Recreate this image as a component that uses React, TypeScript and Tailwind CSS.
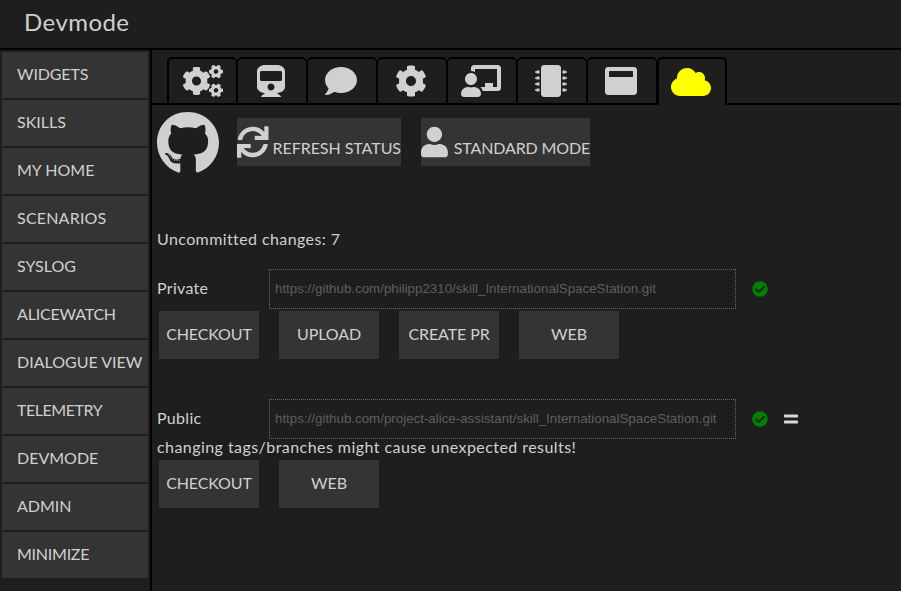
import React from "react";
import { FaCogs, FaTrain, FaComment, FaCog, FaChalkboardTeacher, FaMicrochip, FaWindowMaximize, FaCloud, FaGithub, FaSync, FaUser, FaCheckCircle, FaEquals } from "react-icons/fa";

const menu = [
  { label: "WIDGETS", cls: "tracking-[-0.15px]" },
  { label: "SKILLS", cls: "" },
  { label: "MY HOME", cls: "" },
  { label: "SCENARIOS", cls: "tracking-[0.2px]" },
  { label: "SYSLOG", cls: "" },
  { label: "ALICEWATCH", cls: "tracking-[-0.2px]" },
  { label: "DIALOGUE VIEW", cls: "" },
  { label: "TELEMETRY", cls: "tracking-[-0.45px]" },
  { label: "DEVMODE", cls: "" },
  { label: "ADMIN", cls: "" },
  { label: "MINIMIZE", cls: "tracking-[-0.25px]" },
];
const tabs = [
  { Icon: FaCogs, w: 40, cls: "border-l-2 border-r" },
  { Icon: FaTrain, w: 32, cls: "border-x pr-0.5" },
  { Icon: FaComment, w: 32, cls: "border-x pr-0.5" },
  { Icon: FaCog, w: 32, cls: "border-x pr-0.5" },
  { Icon: FaChalkboardTeacher, w: 40, cls: "border-x pr-0.5" },
  { Icon: FaMicrochip, w: 32, cls: "border-x pr-0.5" },
  { Icon: FaWindowMaximize, w: 32, cls: "border-x pr-0.5" },
];

function Btn({ children }: { children: React.ReactNode }) {
  return <div className="flex h-12 w-[100px] items-center justify-center bg-[#343434] pb-0.5 tracking-[-0.1px] text-[#d0d0d0]">{children}</div>;
}

function UrlBox({ url }: { url: string }) {
  return (
    <div className="ml-[37px] flex h-10 w-[467px] items-center border border-dotted border-[#6a6a6a] pl-[5px] font-['Liberation_Sans',sans-serif] text-[13.333px] text-[#5e5e5e]">
      {url}
    </div>
  );
}

export default function App() {
  return (
    <div className="flex h-[591px] w-[901px] flex-col overflow-hidden bg-[#1e1e1e] font-['Lato',sans-serif] text-[16px] text-[#d0d0d0]">
      <header className="flex h-[50px] shrink-0 items-center border-b-2 border-black pb-[5px] pl-6 text-[24px] leading-none tracking-[0.45px]">Devmode</header>
      <div className="flex min-h-0 flex-1">
        <nav className="flex w-[152px] shrink-0 flex-col gap-0.5 border-r-2 border-black px-0.5 pt-0.5">
          {menu.map((m) => (
            <div key={m.label} className={`flex h-[46px] shrink-0 items-center whitespace-nowrap bg-[#343434] pb-0.5 pl-[15px] text-[#d0d0d0] ${m.cls}`}>{m.label}</div>
          ))}
        </nav>
        <main className="flex min-w-0 flex-1 flex-col">
          <div className="flex h-[55px] shrink-0 items-end pt-[7px]">
            <div className="h-full w-[15px] border-b-2 border-black" />
            {tabs.map(({ Icon, w, cls }, i) => (
              <div key={i} className={`flex h-full w-[70px] items-center justify-center rounded-t-[5px] border-y-2 border-black text-[#d0d0d0] ${cls}`}>
                <Icon size={w} />
              </div>
            ))}
            <div className="flex h-full w-[70px] items-center justify-center rounded-t-[5px] border-x-2 border-t-2 border-black pr-0.5 text-[#ffff00]">
              <FaCloud size={40} />
            </div>
            <div className="h-full flex-1 border-b-2 border-black" />
          </div>
          <div className="flex pl-[5px] pt-1.5">
            <FaGithub className="h-16 w-[62px] text-[#d0d0d0]" />
            <div className="ml-[18px] mt-[7px] flex h-12 w-[164px] items-center whitespace-nowrap bg-[#343434]">
              <FaSync className="mr-1 h-8 w-[33px]" />
              <span className="mt-[11px] tracking-[-0.05px] text-[#d0d0d0]">REFRESH STATUS</span>
            </div>
            <div className="ml-5 mt-[7px] flex h-12 w-[169px] items-center whitespace-nowrap bg-[#343434]">
              <FaUser className="mr-1.5 h-8 w-7" />
              <span className="mt-[11px] tracking-[-0.15px] text-[#d0d0d0]">STANDARD MODE</span>
            </div>
          </div>
          <div className="mt-[54px] pl-[5px] leading-5 tracking-[0.4px]">Uncommitted changes: 7</div>
          <div className="mt-[20px] flex h-10 items-center pl-[5px]">
            <span className="-mt-0.5 w-[75px] tracking-[0.3px]">Private</span>
            <UrlBox url="https://github.com/philipp2310/skill_InternationalSpaceStation.git" />
            <FaCheckCircle size={16} className="ml-4 text-[#008000]" />
          </div>
          <div className="ml-[7px] mt-0.5 flex gap-5">
            <Btn>CHECKOUT</Btn>
            <Btn>UPLOAD</Btn>
            <Btn>CREATE PR</Btn>
            <Btn>WEB</Btn>
          </div>
          <div className="mt-10 flex h-10 items-center pl-[5px]">
            <span className="-mt-0.5 w-[75px] tracking-[0.3px]">Public</span>
            <UrlBox url="https://github.com/project-alice-assistant/skill_InternationalSpaceStation.git" />
            <FaCheckCircle size={16} className="ml-4 text-[#008000]" />
            <FaEquals size={16} className="ml-[15px] text-[#d8d8d8]" />
          </div>
          <div className="-mt-px pl-[5px] leading-[18px] tracking-[0.44px]">changing tags/branches might cause unexpected results!</div>
          <div className="ml-[7px] mt-1 flex gap-5">
            <Btn>CHECKOUT</Btn>
            <Btn>WEB</Btn>
          </div>
        </main>
      </div>
    </div>
  );
}
